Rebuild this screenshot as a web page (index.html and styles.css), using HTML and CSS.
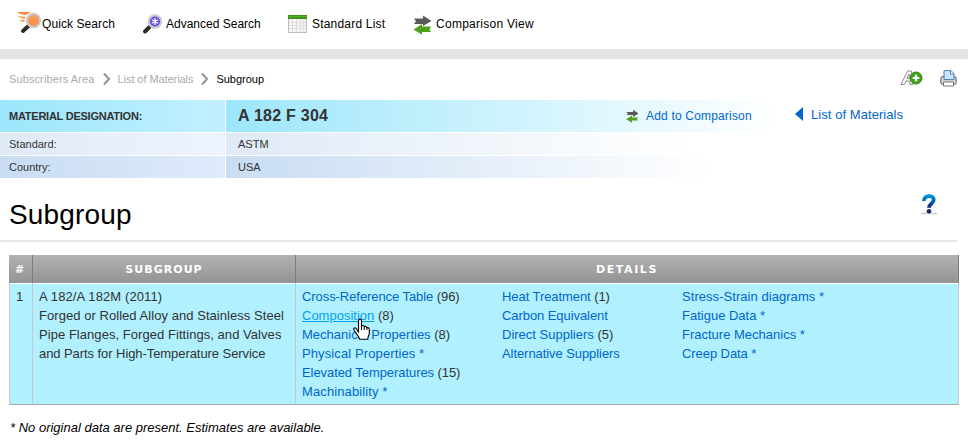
FILE: index.html
```html
<!DOCTYPE html>
<html lang="en">
<head>
<meta charset="utf-8">
<title>Subgroup</title>
<link rel="stylesheet" href="styles.css">
</head>
<body>
<svg class="defs" width="0" height="0">
  <defs>
    <linearGradient id="help" x1="0" y1="0" x2="0" y2="1"><stop offset="0" stop-color="#0092d6"/><stop offset="1" stop-color="#15266b"/></linearGradient>
    <symbol id="swap" viewBox="0 0 19 20">
      <path d="M1 3.500h9V.5l8.500 5.500-8.500 5V9H1l2-2.700z" fill="#5a5a5a"/>
      <path d="M18 11.500H9V9l-8.500 5.500L9 19.800V17h9l-1.500-2.700z" fill="#4fa31c"/>
    </symbol>
  </defs>
</svg>
<nav class="nav">
  <a class="nav-item quick"><svg width="25" height="22" viewBox="0 0 25 22">
    <path d="M0 0h14L9 3 3 2zM0 4l9 1-2 2zM2 8l6 0-1 2z" fill="#ff8a3c"/>
    <path d="M11.500 14L6 19" stroke="#2b2b2b" stroke-width="4" stroke-linecap="round"/>
    <circle cx="16.500" cy="8.500" r="6.600" fill="#f9924e" stroke="#c9cacc" stroke-width="2.200"/>
    <path d="M12.500 7q4-4 8 0" stroke="#fdb37d" fill="none"/>
  </svg><span>Quick Search</span></a>
  <a class="nav-item advanced"><svg width="21" height="22" viewBox="0 0 21 22">
    <path d="M7.500 14L3 18.500" stroke="#2b2b2b" stroke-width="4" stroke-linecap="round"/>
    <circle cx="13" cy="8.500" r="6.200" fill="#6c4fe0" stroke="#c9cacc" stroke-width="2.200"/>
    <path d="M13 5v7M10 6.800l6 3.400M16 6.800l-6 3.400" stroke="#fff" stroke-width="1.300"/>
  </svg><span>Advanced Search</span></a>
  <a class="nav-item standard"><svg width="19" height="19" viewBox="0 0 19 19" shape-rendering="crispEdges">
    <path d="M0 0h19v18H0z" fill="#bdbdbd"/><path d="M1 4h17v13H1z" fill="#f5f5f5"/>
    <path d="M0 0h19v4H0z" fill="#3d9414"/><path d="M1 1h17v1H1z" fill="#55ad28"/>
    <path d="M1 7.500h17M1 10.500h17M1 13.500h17M4.500 4v13M8.500 4v13M12.500 4v13M15.500 4v13" stroke="#dedede"/>
  </svg><span>Standard List</span></a>
  <a class="nav-item compare"><svg width="19" height="20"><use href="#swap"/></svg><span>Comparison View</span></a>
</nav>
<div class="crumb-bar">
  <div class="crumbs">
    <a class="wider">Subscribers Area</a>
    <svg width="8" height="12" viewBox="0 0 8 12"><path d="M1 .5L6 6 1 11.500" fill="none" stroke="#999" stroke-width="2.200"/></svg>
    <a class="tight">List of Materials</a>
    <svg width="8" height="12" viewBox="0 0 8 12"><path d="M1 .5L6 6 1 11.500" fill="none" stroke="#999" stroke-width="2.200"/></svg>
    <span class="current">Subgroup</span>
  </div>
  <div class="tools">
    <svg width="23" height="16" viewBox="0 0 23 16">
      <path d="M1 14.500L7.500 1h4l1.500 13.500H9.800L9.600 11H6l-1.700 3.500zM7 8.500h2.500L9 3.800z" fill="#fff" stroke="#8d8d8d"/>
      <circle cx="16" cy="8" r="6" fill="#3fa51c" stroke="#2b7d10"/>
      <path d="M16 4.700v6.600M12.700 8h6.600" stroke="#fff" stroke-width="2.200"/>
    </svg>
    <svg width="17" height="17" viewBox="0 0 17 17">
      <rect x=".8" y="6.500" width="15.400" height="8" rx="2" fill="#d4d4d4" stroke="#606060"/>
      <path d="M4 9.500V.6h7l3 3v6z" fill="#c9e4fc" stroke="#4d80b5"/><path d="M10.500 1v3.200H14" fill="#fff" stroke="#4d80b5"/>
      <path d="M3.500 12h10v4h-10z" fill="#fff" stroke="#777"/>
    </svg>
  </div>
</div>
<div class="material">
  <div class="props">
    <div class="label first">MATERIAL DESIGNATION:</div>
    <div class="value first"><b>A 182 F 304</b><a class="add"><svg width="13" height="14" viewBox="0 0 13 14"><path d="M0 3h7V.8l5.500 3.700L7 8V6H.5L2 4.500z" fill="#5a5a5a"/><path d="M12 8.500H6V6.500L.2 10.200 6 13.800V11.500h6L11 10z" fill="#4fa31c"/></svg><span>Add to Comparison</span></a></div>
    <div class="label second">Standard:</div><div class="value second">ASTM</div>
    <div class="label third">Country:</div><div class="value third">USA</div>
  </div>
  <a class="back"><svg width="8" height="14" viewBox="0 0 8 14"><path d="M8 0v14L0 7z" fill="#0066cc"/></svg><span>List of Materials</span></a>
</div>
<header class="title">
  <h1>Subgroup</h1>
  <svg width="16" height="21" viewBox="0 0 16 21">
    <path d="M0 19.500h16" stroke="#ccc" stroke-width="1.500"/>
    <path d="M3 7C2.500 .8 12.900 .6 12.700 5.800c0 3.700-4.700 3.700-4.700 8" fill="none" stroke="url(#help)" stroke-width="3.800"/>
    <circle cx="8" cy="17.300" r="2.300" fill="#15266b"/>
  </svg>
</header>
<div class="grid">
  <div class="th">#</div><div class="th sub">SUBGROUP</div><div class="th">DETAILS</div>
  <div class="td num">1</div>
  <div class="td desc"><span class="wider">A 182/A 182M (2011)</span><br><span class="wide">Forged or Rolled Alloy and Stainless Steel</span><br><span class="wide">Pipe Flanges, Forged Fittings, and Valves</span><br><span class="tight">and Parts for High-Temperature Service</span></div>
  <div class="td details">
    <ul>
      <li class="tight"><a>Cross-Reference Table</a> (96)</li>
      <li class="hovered"><a class="hover">Composition</a> (8)
        <svg class="cursor" width="18" height="23" viewBox="0 0 18 23"><path d="M5.500 14V3c0-2.500 3-2.500 3 0v5c1-1 2.500-.5 2.700.7 1-.6 2.300-.2 2.500 1 1.200-.5 2.600.2 2.600 1.500v4c0 2-1.500 3-1.500 6H6.500c0-2-2-4-3.500-6L1 12c-1-1.700 1-2.700 2-1.700z" fill="#fff" stroke="#000" stroke-width="1.100"/><path d="M8.500 8v4M11.300 9v3M14 10v2" stroke="#000"/></svg>
      </li>
      <li><a>Mechanical Properties</a> (8)</li>
      <li class="wider"><a>Physical Properties *</a></li>
      <li class="tight"><a>Elevated Temperatures</a> (15)</li>
      <li class="wider"><a>Machinability *</a></li>
    </ul>
    <ul>
      <li class="tight"><a>Heat Treatment</a> (1)</li>
      <li class="tight"><a>Carbon Equivalent</a></li>
      <li><a>Direct Suppliers</a> (5)</li>
      <li class="tight"><a>Alternative Suppliers</a></li>
    </ul>
    <ul>
      <li class="wide"><a>Stress-Strain diagrams *</a></li>
      <li><a>Fatigue Data *</a></li>
      <li><a>Fracture Mechanics *</a></li>
      <li class="tight"><a>Creep Data *</a></li>
    </ul>
  </div>
</div>
<p class="note">* No original data are present. Estimates are available.</p>
</body>
</html>
```
FILE: styles.css
```css
* { box-sizing: border-box; }
body { margin: 0; width: 968px; height: 444px; overflow: hidden; background: #fff; color: #333; font: 13px/19px "Liberation Sans", Arial, sans-serif; }
svg { display: block; flex: none; }
.defs { position: absolute; }
a { color: #0066cc; }
.wide { letter-spacing: .05px; }
.wider { letter-spacing: .11px; }
.tight { letter-spacing: -.07px; }

.nav { display: flex; height: 49px; padding-left: 17px; }
.nav-item { display: flex; color: #000; font-size: 12px; line-height: 16px; white-space: nowrap; }
.nav-item span { padding-top: 16px; }
.nav-item svg { margin-top: 12px; }
.quick { width: 125px; letter-spacing: .08px; }
.advanced { width: 146px; }
.advanced svg { margin: 13px 3px 0 0; }
.standard { width: 125px; letter-spacing: .2px; }
.standard svg { margin: 15px 5px 0 0; }
.compare { letter-spacing: .27px; }
.compare svg { margin: 15px 4px 0 0; }

.crumb-bar { display: flex; justify-content: space-between; height: 51px; border-top: 10px solid #e5e5e5; padding: 0 11px 0 9px; }
.crumbs { display: flex; height: 40px; align-items: center; font-size: 11px; }
.crumbs a { color: #aaa; }
.crumbs svg { margin: 0 7px 0 8px; }
.crumbs .current { color: #000; }
.tools { display: flex; gap: 17px; padding-top: 11px; }

.material { display: flex; height: 78px; }
.props { display: grid; width: 777px; grid-template: 32px 22px 22px / 225px 551px; gap: 1px; font-size: 11px; }
.label, .value { display: flex; align-items: center; }
.label { padding-left: 9px; }
.value { padding-left: 12px; }
.label.first { font-weight: bold; letter-spacing: -.24px; background: linear-gradient(90deg, #9ce6fb, #c2f0ff); }
.value.first { background: linear-gradient(90deg, #9ce6fb, #fff); }
.label.second { background: linear-gradient(90deg, #dfeaf7, #eef4fd); }
.value.second { background: linear-gradient(90deg, #dfeaf7, #fff 85%); }
.label.third { background: linear-gradient(90deg, #c8dcf3, #dfebfb); }
.value.third { background: linear-gradient(90deg, #c8dcf3, #fff 88%); }
.value b { font-size: 16px; width: 388px; letter-spacing: .25px; line-height: 18px; padding-bottom: 1px; }
.add { display: flex; align-items: center; gap: 7px; font-size: 12px; letter-spacing: .18px; white-space: nowrap; }
.back { display: flex; gap: 8px; padding: 5px 0 0 18px; letter-spacing: .06px; white-space: nowrap; }
.back svg { margin-top: 2px; }

.title { display: flex; justify-content: space-between; width: 957px; height: 64px; border-bottom: 2px solid #e8e8e8; padding: 16px 20px 0 9px; }
h1 { margin: 0; font-size: 28px; line-height: 42px; font-weight: normal; letter-spacing: .15px; color: #000; }

.grid { display: grid; grid-template: 30px 121px / 24px 263px 663px; width: 950px; margin: 12px 0 0 9px; }
.th { margin-top: 1px; border-right: 1px solid #7d7d7d; border-bottom: 1px solid #fff; background: linear-gradient(#b2b2b2, #939393); color: #fff; font: bold 11px/29px "DejaVu Sans", sans-serif; letter-spacing: 1.6px; text-align: center; }
.th.sub { letter-spacing: 1.05px; }
.td { border-right: 1px solid #c8c8c8; border-bottom: 1px solid #aaa; background: #b0f0ff; padding: 3px 0 0 6px; white-space: nowrap; }
.num { border-left: 1px solid #c8c8c8; }
.details { display: grid; grid-template-columns: 200px 180px 1fr; }
ul { list-style: none; margin: 0; padding: 0; }
.hovered { position: relative; }
.hover { color: #00a0f0; text-decoration: underline; }
.cursor { position: absolute; left: 51px; top: 12px; }
.note { margin: 13px 0 0 10px; font-style: italic; color: #000; }
```
